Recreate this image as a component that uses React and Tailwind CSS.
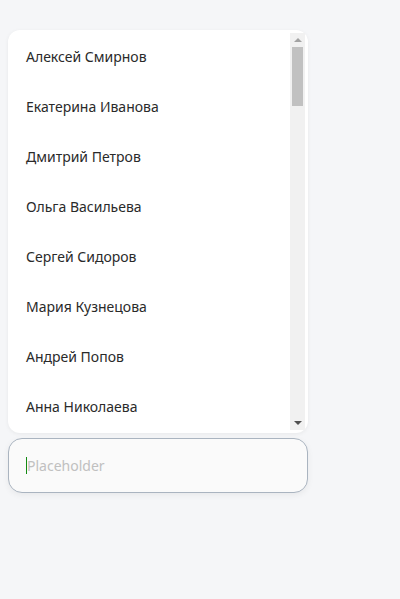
import { useState } from 'react';

const names = [
  'Алексей Смирнов', 'Екатерина Иванова', 'Дмитрий Петров', 'Ольга Васильева',
  'Сергей Сидоров', 'Мария Кузнецова', 'Андрей Попов', 'Анна Николаева',
  'Иван Соколов', 'Татьяна Морозова', 'Николай Волков', 'Елена Лебедева',
  'Павел Козлов', 'Наталья Новикова', 'Михаил Фёдоров', 'Ирина Егорова',
  'Владимир Орлов', 'Светлана Павлова', 'Артём Семёнов', 'Юлия Голубева',
  'Роман Виноградов', 'Ксения Богданова', 'Игорь Воробьёв', 'Дарья Фролова',
  'Константин Зайцев', 'Алина Белова', 'Максим Тарасов', 'Виктория Комарова',
  'Евгений Киселёв', 'Людмила Макарова', 'Олег Андреев', 'Галина Ковалёва',
  'Василий Ильин', 'Вера Гусева', 'Григорий Титов', 'Полина Кудрявцева',
  'Денис Баранов', 'Марина Куликова', 'Кирилл Алексеев', 'Софья Степанова',
  'Юрий Яковлев', 'Надежда Сорокина', 'Тимур Романов', 'Лариса Захарова',
  'Борис Борисов', 'Анастасия Королёва', 'Степан Герасимов', 'Валерия Пономарёва',
  'Фёдор Григорьев', 'Оксана Лазарева',
];

// classic-looking scrollbar, drawn since the headless browser hides native ones
function Scrollbar() {
  return (
    <div className="flex w-[15px] shrink-0 flex-col items-center bg-[#f1f1f1]">
      <div className="flex h-[14px] w-full items-center justify-center">
        <div className="h-0 w-0 border-x-[4px] border-b-[4px] border-x-transparent border-b-[#a3a3a3]" />
      </div>
      <div className="h-[59px] w-[11px] bg-[#c1c1c1]" />
      <div className="flex-1" />
      <div className="flex h-[14px] w-full items-center justify-center">
        <div className="h-0 w-0 border-x-[4px] border-t-[4px] border-x-transparent border-t-[#505050]" />
      </div>
    </div>
  );
}

export default function App() {
  const [value, setValue] = useState('');

  return (
    <div className="min-h-[599px] w-[400px] bg-[#f5f6f8] pt-[30px] pl-2 font-['Noto_Sans',sans-serif]">
      <div className="flex h-[403px] w-[300px] rounded-xl bg-white p-[3px] shadow-[0_1px_4px_rgba(0,0,0,0.06)]">
        <ul className="h-full flex-1 overflow-y-auto [scrollbar-width:none]">
          {names.map((name) => (
            <li key={name} className="flex h-[50px] items-center pb-[4px] pl-[15px] text-[14px] text-[#2a2a2a]">
              {name}
            </li>
          ))}
        </ul>
        <Scrollbar />
      </div>
      <div className="relative mt-[5px] w-[300px]">
        <input
          autoFocus
          value={value}
          onChange={(e) => setValue(e.target.value)}
          placeholder="Placeholder"
          className="block h-[55px] w-full rounded-[14px] border border-[#aab4c0] bg-[#fafafa] pl-[18px] pr-4 text-[14px] text-[#222] caret-[#1a8a1a] outline-none placeholder:text-[#c0c0c0] shadow-[0_2px_6px_rgba(0,0,0,0.06)]"
        />
        {/* caret as seen in the focused field */}
        <span className="pointer-events-none absolute left-[18px] top-[19px] h-[17px] w-px bg-[#138a13]" />
      </div>
    </div>
  );
}
